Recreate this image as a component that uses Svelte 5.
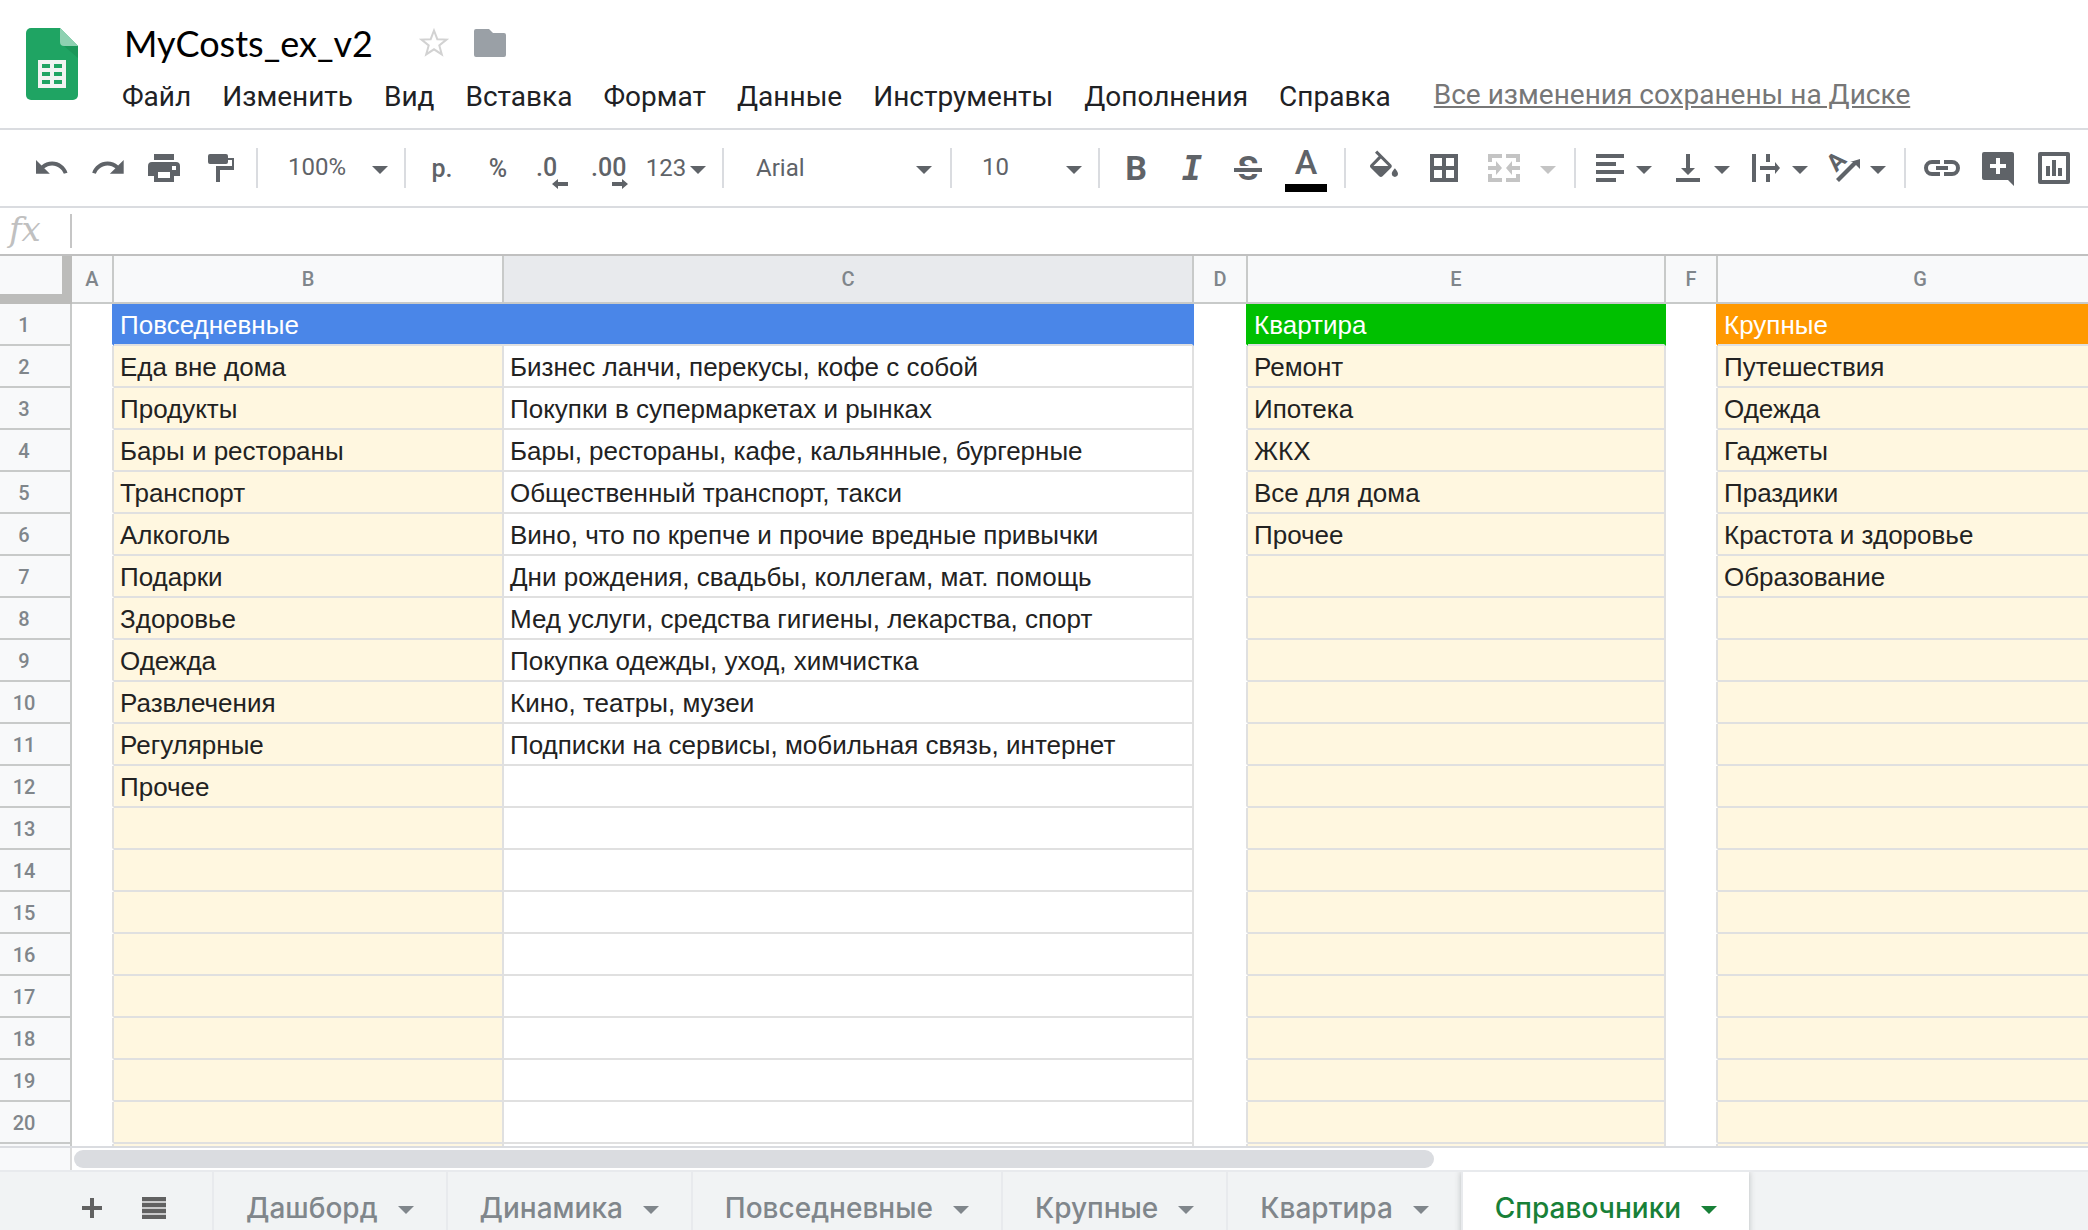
<script lang="ts">
  type Row = { b?: string; c?: string; e?: string; g?: string };

  const menus = ['Файл', 'Изменить', 'Вид', 'Вставка', 'Формат', 'Данные', 'Инструменты', 'Дополнения', 'Справка'];
  const columns = ['A', 'B', 'C', 'D', 'E', 'F', 'G'];
  const tabs = ['Дашборд', 'Динамика', 'Повседневные', 'Крупные', 'Квартира', 'Справочники'];

  const rows: Row[] = [
    { b: 'Еда вне дома', c: 'Бизнес ланчи, перекусы, кофе с собой', e: 'Ремонт', g: 'Путешествия' },
    { b: 'Продукты', c: 'Покупки в супермаркетах и рынках', e: 'Ипотека', g: 'Одежда' },
    { b: 'Бары и рестораны', c: 'Бары, рестораны, кафе, кальянные, бургерные', e: 'ЖКХ', g: 'Гаджеты' },
    { b: 'Транспорт', c: 'Общественный транспорт, такси', e: 'Все для дома', g: 'Праздики' },
    { b: 'Алкоголь', c: 'Вино, что по крепче и прочие вредные привычки', e: 'Прочее', g: 'Крастота и здоровье' },
    { b: 'Подарки', c: 'Дни рождения, свадьбы, коллегам, мат. помощь', g: 'Образование' },
    { b: 'Здоровье', c: 'Мед услуги, средства гигиены, лекарства, спорт' },
    { b: 'Одежда', c: 'Покупка одежды, уход, химчистка' },
    { b: 'Развлечения', c: 'Кино, театры, музеи' },
    { b: 'Регулярные', c: 'Подписки на сервисы, мобильная связь, интернет' },
    { b: 'Прочее' },
    ...Array.from({ length: 9 }, () => ({}))
  ];

  const icons = {
    undo: 'M12.5 8c-2.65 0-5.05.99-6.9 2.6L2 7v9h9l-3.62-3.62c1.39-1.16 3.16-1.88 5.12-1.88 3.54 0 6.55 2.31 7.6 5.5l2.37-.78C21.08 11.03 17.15 8 12.5 8z',
    redo: 'M18.4 10.6C16.55 8.99 14.15 8 11.5 8c-4.65 0-8.58 3.03-9.96 7.22L3.9 16c1.05-3.19 4.05-5.5 7.6-5.5 1.95 0 3.73.72 5.12 1.88L13 16h9V7l-3.6 3.6z',
    print: 'M8 4h20v6H8zM6 12h24a4 4 0 0 1 4 4v10h-6v6H8v-6H2V16a4 4 0 0 1 4-4zM12 22v6h12v-6zM26 16v4h4v-4z',
    paint: 'M8 4h16a2 2 0 0 1 2 2v2h6v12H18v12h-4V16h16v-6h-4v2a2 2 0 0 1-2 2H8a2 2 0 0 1-2-2V6a2 2 0 0 1 2-2z',
    fill: 'M16.56 8.94L7.62 0 6.21 1.41l2.38 2.38-5.15 5.15c-.59.59-.59 1.54 0 2.12l5.5 5.5c.29.29.68.44 1.06.44s.77-.15 1.06-.44l5.5-5.5c.59-.58.59-1.53 0-2.12zM5.21 10L10 5.21 14.79 10H5.21zM19 11.5s-2 2.17-2 3.5c0 1.1.9 2 2 2s2-.9 2-2c0-1.33-2-3.5-2-3.5z',
    borders: 'M4 4h28v28H4zM8 8v8h8V8zM20 8v8h8V8zM8 20v8h8v-8zM20 20v8h8v-8z',
    merge: 'M2 4h14v4H6v4H2zM34 4H20v4h10v4h4zM2 32h14v-4H6v-4H2zM34 32H20v-4h10v-4h4zM2 16h8v-5l6 7-6 7v-5H2zM34 16h-8v-5l-6 7 6 7v-5h8z',
    align: 'M4 4h28v4H4zM4 12h20v4H4zM4 20h28v4H4zM4 28h20v4H4z',
    valign: 'M16 4h4v14h5l-7 7-7-7h5zM6 28h24v4H6z',
    wrap: 'M4 4h4v28H4zM18 4h4v8h-4zM18 24h4v8h-4zM12 16h15v-4l5 6-5 6v-4H12z',
    link: 'M16 10H8a8 8 0 0 0 0 16h8v-4H8a4 4 0 0 1 0-8h8zM20 10h8a8 8 0 0 1 0 16h-8v-4h8a4 4 0 0 0 0-8h-8zM12 16h12v4H12z',
    comment: 'M4 2h28a2 2 0 0 1 2 2v32l-6-6H4a2 2 0 0 1-2-2V4a2 2 0 0 1 2-2zM16 8v6h-6v4h6v6h4v-6h6v-4h-6V8z',
    chart: 'M4 2h28a2 2 0 0 1 2 2v28a2 2 0 0 1-2 2H4a2 2 0 0 1-2-2V4a2 2 0 0 1 2-2zM6 6v24h24V6zM10 16h4v10h-4zM16 10h4v16h-4zM22 18h4v8h-4z'
  };

  // Icons drawn on a grid other than 36 x 36
  const boxes: Record<string, string> = {
    undo: '0.7 0.5 23.4 23.4',
    redo: '0.1 0.5 23.4 23.4',
    fill: '0.43 -0.3 23.14 23.14'
  };

  let active = $state('Справочники');
  let zoom = $state('100%');
  let font = $state('Arial');
  let size = $state('10');
  let formula = $state('');
</script>

{#snippet icon(name: keyof typeof icons)}
  <svg class="icon" viewBox={boxes[name] ?? '0 0 36 36'} aria-hidden="true">
    <path fill-rule="evenodd" d={icons[name]} />
  </svg>
{/snippet}

{#snippet caret()}
  <svg class="caret" viewBox="0 0 16 8" aria-hidden="true"><path d="M0 0h16L8 8z" /></svg>
{/snippet}

{#snippet tool(name: keyof typeof icons, label: string)}
  <button class="tool" aria-label={label}>{@render icon(name)}</button>
{/snippet}

{#snippet dropTool(name: keyof typeof icons, label: string)}
  <button class="tool drop" aria-label={label}>{@render icon(name)}{@render caret()}</button>
{/snippet}

<div class="app">
  <header>
    <svg class="logo" viewBox="0 0 52 72" aria-hidden="true">
      <path fill="#1fa463" d="M5 0h29l18 18v49a5 5 0 0 1-5 5H5a5 5 0 0 1-5-5V5a5 5 0 0 1 5-5z" />
      <path fill="#8ed1b1" d="M34 0l18 18H38a4 4 0 0 1-4-4z" />
      <path fill="#188a50" d="M38 18h14v12z" opacity="0.5" />
      <path fill="#f1f3f2" fill-rule="evenodd" d="M12 32h28v28H12zM16 36v4h8v-4zM28 36v4h8v-4zM16 44v4h8v-4zM28 44v4h8v-4zM16 52v4h8v-4zM28 52v4h8v-4z" />
    </svg>
    <div class="heading">
      <div class="title">
        <h1>MyCosts_ex_v2</h1>
        <button class="star" aria-label="Пометить">
          <svg viewBox="0 0 32 32" aria-hidden="true"><path d="M16 3.5l3.3 8.7 9.2.4-7.2 5.8 2.5 9-7.8-5.1-7.8 5.1 2.5-9-7.2-5.8 9.2-.4z" /></svg>
        </button>
        <button class="folder" aria-label="Переместить">
          <svg viewBox="0 0 32 28" aria-hidden="true"><path d="M2 0h13l4 4h11a2 2 0 0 1 2 2v20a2 2 0 0 1-2 2H2a2 2 0 0 1-2-2V2a2 2 0 0 1 2-2z" /></svg>
        </button>
      </div>
      <nav>
        {#each menus as item}
          <button>{item}</button>
        {/each}
        <a href="#saved">Все изменения сохранены на Диске</a>
      </nav>
    </div>
  </header>

  <div class="toolbar" role="toolbar">
    <div class="group">
      {@render tool('undo', 'Отменить')}
      {@render tool('redo', 'Повторить')}
      {@render tool('print', 'Печать')}
      {@render tool('paint', 'Копировать форматирование')}
    </div>
    <div class="group">
      <div class="select">
        <select aria-label="Масштаб" bind:value={zoom}><option>100%</option></select>
        {@render caret()}
      </div>
    </div>
    <div class="group">
      <button class="tool">р.</button>
      <button class="tool">%</button>
      <button class="tool" aria-label="Уменьшить число знаков">
        <svg class="icon" viewBox="0 0 36 36"><text x="0" y="26">.0</text><path d="M16 34l6-5v3h10v4H22v3z" /></svg>
      </button>
      <button class="tool" aria-label="Увеличить число знаков">
        <svg class="icon" viewBox="0 0 36 36"><text x="-1" y="26">.00</text><path d="M36 34l-6-5v3H20v4h10v3z" /></svg>
      </button>
      <button class="tool formats">123{@render caret()}</button>
    </div>
    <div class="group">
      <div class="select font">
        <select aria-label="Шрифт" bind:value={font}><option>Arial</option></select>
        {@render caret()}
      </div>
    </div>
    <div class="group">
      <div class="select">
        <select aria-label="Размер шрифта" bind:value={size}><option>10</option></select>
        {@render caret()}
      </div>
    </div>
    <div class="group">
      <button class="tool letter bold">B</button>
      <button class="tool letter italic">I</button>
      <button class="tool" aria-label="Зачеркнутый">
        <svg class="icon" viewBox="0 0 36 36">
          <text class="strike" x="18" y="30" text-anchor="middle">S</text>
          <path fill="#fff" d="M4 16h28v8H4z" />
          <path d="M4 18h28v4H4z" />
        </svg>
      </button>
      <button class="tool wide color"><span>A</span></button>
    </div>
    <div class="group">
      <button class="tool wide" aria-label="Цвет заливки">{@render icon('fill')}</button>
      <button class="tool wide" aria-label="Границы">{@render icon('borders')}</button>
      <button class="tool merge" aria-label="Объединить ячейки" disabled>{@render icon('merge')}{@render caret()}</button>
    </div>
    <div class="group">
      {@render dropTool('align', 'Выравнивание по горизонтали')}
      {@render dropTool('valign', 'Выравнивание по вертикали')}
      {@render dropTool('wrap', 'Перенос текста')}
      <button class="tool drop" aria-label="Поворот текста">
        <svg class="icon" viewBox="0 0 36 36">
          <text class="turned" transform="translate(16 17) rotate(-45)" text-anchor="middle">A</text>
          <path d="M10 29l17-17h-3l10-3v10l-4-4-17 17z" />
        </svg>
        {@render caret()}
      </button>
    </div>
    <div class="group">
      {@render tool('link', 'Вставить ссылку')}
      {@render tool('comment', 'Вставить комментарий')}
      {@render tool('chart', 'Вставить диаграмму')}
    </div>
  </div>

  <div class="formula">
    <label for="formula">fx</label>
    <input id="formula" bind:value={formula} />
  </div>

  <main>
    <table>
      <colgroup>
        <col class="w-num" /><col class="w-a" /><col class="w-b" /><col class="w-c" /><col class="w-d" /><col class="w-e" /><col class="w-f" /><col />
      </colgroup>
      <thead>
        <tr>
          <td class="corner"></td>
          {#each columns as column}
            <th scope="col" class:selected={column === 'C'}>{column}</th>
          {/each}
        </tr>
      </thead>
      <tbody>
        <tr class="first">
          <th scope="row">1</th>
          <td class="gap before-blue"></td>
          <td class="blue" colspan="2">Повседневные</td>
          <td class="gap before-green"></td>
          <td class="green">Квартира</td>
          <td class="gap before-orange"></td>
          <td class="orange">Крупные</td>
        </tr>
        {#each rows as row, i}
          <tr>
            <th scope="row">{i < 19 ? i + 2 : ''}</th>
            <td class="gap"></td>
            <td class="cream">{row.b ?? ''}</td>
            <td>{row.c ?? ''}</td>
            <td class="gap"></td>
            <td class="cream">{row.e ?? ''}</td>
            <td class="gap"></td>
            <td class="cream">{row.g ?? ''}</td>
          </tr>
        {/each}
      </tbody>
    </table>
  </main>

  <div class="scroll">
    <div class="track"><div class="thumb"></div></div>
  </div>

  <footer>
    <div class="sheet-tools">
      <button aria-label="Добавить лист">
        <svg class="plus" viewBox="0 0 20 20" aria-hidden="true"><path d="M8 0h4v8h8v4h-8v8H8v-8H0V8h8z" /></svg>
      </button>
      <button aria-label="Все листы">
        <svg class="list" viewBox="0 0 24 24" aria-hidden="true">
          <path fill="#c9c9ca" d="M0 1h24v22H0z" />
          <path d="M0 1h24v4H0zM0 7h24v4H0zM0 13h24v4H0zM0 19h24v4H0z" />
        </svg>
      </button>
    </div>
    {#each tabs as tab}
      <button class="tab" class:active={tab === active} onclick={() => (active = tab)}>
        {tab}{@render caret()}
      </button>
    {/each}
  </footer>
</div>

<style>
  :global(body) {
    margin: 0;
    background: #fff;
  }

  .app {
    display: flex;
    flex-direction: column;
    height: 100vh;
    overflow: hidden;
    font-family: Roboto, 'Liberation Sans', sans-serif;
    color: #202124;
  }

  button,
  select,
  input {
    margin: 0;
    padding: 0;
    border: 0;
    background: none;
    color: inherit;
    font: inherit;
  }

  svg {
    display: block;
    flex: none;
    fill: currentColor;
  }

  /* Header */
  header {
    display: flex;
    gap: 44px;
    padding: 20px 26px 14px;
    border-bottom: 2px solid #dadce0;
  }

  .logo {
    width: 52px;
    height: 72px;
    margin-top: 8px;
  }

  .title {
    display: flex;
    align-items: center;
    height: 46px;
    padding-left: 2px;
  }

  h1 {
    margin: 0;
    font-family: Lato, sans-serif;
    font-size: 36px;
    font-weight: 400;
    color: #000;
  }

  .star {
    margin-left: 45px;
  }

  .star svg {
    width: 32px;
    height: 32px;
    fill: none;
    stroke: #d2d2d2;
    stroke-width: 2;
  }

  .folder {
    margin-left: 24px;
    color: #9aa0a6;
  }

  .folder svg {
    width: 32px;
    height: 28px;
  }

  nav {
    display: flex;
    align-items: flex-start;
    gap: 31px;
    height: 48px;
    font-size: 28px;
    line-height: 62px;
    white-space: nowrap;
  }

  nav a {
    margin-left: 12px;
    color: #777;
    line-height: 58px;
  }

  /* Toolbar */
  .toolbar {
    display: flex;
    align-items: center;
    height: 76px;
    padding-left: 16px;
    border-bottom: 2px solid #dadce0;
    color: #5f6368;
    font-size: 25px;
    font-weight: 500;
  }

  .group {
    display: flex;
    align-items: center;
    height: 40px;
    padding: 0 8px;
  }

  .group + .group {
    border-left: 2px solid #dadce0;
  }

  .tool {
    display: flex;
    align-items: center;
    justify-content: center;
    width: 56px;
    height: 40px;
  }

  .icon {
    width: 36px;
    height: 36px;
    overflow: visible;
  }

  .caret {
    width: 16px;
    height: 8px;
    margin-top: 4px;
  }

  .wide {
    width: 60px;
  }

  .formats {
    gap: 4px;
    width: 76px;
    font-size: 24px;
    font-weight: 400;
  }

  .drop,
  .merge {
    justify-content: flex-start;
    gap: 8px;
    width: 78px;
    padding-left: 8px;
  }

  .merge {
    gap: 18px;
    width: 92px;
    padding-left: 12px;
    color: #c4c4c4;
  }

  .select {
    display: grid;
    align-items: center;
    width: 130px;
  }

  .select.font {
    width: 210px;
  }

  .select > :global(*) {
    grid-area: 1 / 1;
  }

  .select .caret {
    justify-self: end;
    margin-right: 8px;
    pointer-events: none;
  }

  .select.font .caret {
    margin-right: 10px;
  }

  select {
    appearance: none;
    width: 100%;
    padding-left: 22px;
    padding-bottom: 2px;
    font-size: 24px;
    font-weight: 400;
  }

  .select.font select {
    padding-left: 24px;
    padding-bottom: 0;
  }

  .letter {
    font-size: 34px;
  }

  .bold {
    font-weight: 700;
  }

  .italic {
    font-family: 'DejaVu Sans Mono', monospace;
    font-weight: 700;
    font-style: italic;
  }

  .strike {
    font-size: 34px;
    font-weight: 700;
  }

  .turned {
    font-size: 24px;
    font-weight: 700;
  }

  .color span {
    width: 42px;
    height: 40px;
    border-bottom: 8px solid #000;
    font-size: 34px;
    line-height: 36px;
  }

  /* Formula bar */
  .formula {
    display: flex;
    align-items: center;
    height: 46px;
    border-bottom: 2px solid #c0c0c0;
  }

  .formula label {
    width: 61px;
    padding: 0 0 4px 9px;
    color: #c0c0c0;
    font-family: 'DejaVu Serif', serif;
    font-size: 34px;
    font-style: italic;
    line-height: 34px;
  }

  .formula input {
    flex: 1;
    height: 34px;
    padding-left: 8px;
    border-left: 2px solid #c6c6c6;
    font-size: 26px;
    outline: none;
  }

  /* Grid */
  main {
    flex: 1;
    min-height: 0;
    overflow: hidden;
  }

  /* The last column runs on past the window's edge */
  table {
    width: calc(100% + 36px);
    table-layout: fixed;
    border-spacing: 0;
    font-family: 'Liberation Sans', Arial, sans-serif;
  }

  .w-num {
    width: 72px;
  }

  .w-a {
    width: 42px;
  }

  .w-b {
    width: 390px;
  }

  .w-c {
    width: 690px;
  }

  .w-d {
    width: 54px;
  }

  .w-e {
    width: 418px;
  }

  .w-f {
    width: 52px;
  }

  th,
  td {
    box-sizing: border-box;
    height: 42px;
    padding: 0;
    border-right: 2px solid #e0e0e0;
    border-bottom: 2px solid #e0e0e0;
    white-space: nowrap;
  }

  th {
    background: #f8f9fa;
    border-color: #c8cac9;
    color: #80868b;
    font-family: Roboto, sans-serif;
    font-size: 20px;
    font-weight: 500;
  }

  thead th,
  thead td {
    height: 48px;
    border-color: #c8cac9;
  }

  tbody th {
    padding: 2px 22px 0 0;
  }

  .selected {
    background: #e8eaed;
  }

  thead .corner {
    background: #f8f9fa;
    border-right: 10px solid #bcbcba;
    border-bottom: 10px solid #bcbcba;
  }

  tbody td {
    padding: 2px 0 0 6px;
    color: #222;
    font-size: 26px;
    line-height: 38px;
  }

  td.gap {
    border-bottom-color: transparent;
  }

  .cream {
    background: #fff7e0;
  }

  .first td {
    color: #fff;
  }

  .first .blue {
    background: #4a86e8;
  }

  .first .green {
    background: #00c000;
  }

  .first .orange {
    background: #ff9900;
  }

  .first .blue,
  .first .before-blue {
    border-right-color: #4a86e8;
  }

  .first .green,
  .first .before-green {
    border-right-color: #00c000;
  }

  .first .orange,
  .first .before-orange {
    border-right-color: #ff9900;
  }

  /* Scrollbar */
  .scroll {
    height: 22px;
    padding-left: 70px;
    border-top: 2px solid #dadce0;
    background: #f8f9fa;
  }

  .track {
    box-sizing: border-box;
    height: 22px;
    padding: 2px;
    border-left: 2px solid #dadada;
    background: #fff;
  }

  .thumb {
    width: 67.6%;
    height: 18px;
    border-radius: 9px;
    background: #dadce0;
  }

  /* Sheet tabs */
  footer {
    display: flex;
    height: 58px;
    border-top: 2px solid #e8eaed;
    background: #f1f3f4;
    overflow: hidden;
  }

  .sheet-tools {
    display: flex;
    align-items: center;
    gap: 40px;
    height: 72px;
    padding: 0 46px 0 82px;
    color: #616161;
  }

  .plus {
    width: 20px;
    height: 20px;
  }

  .list {
    width: 24px;
    height: 24px;
  }

  .tab {
    display: flex;
    align-items: center;
    gap: 20px;
    height: 72px;
    padding: 0 32px;
    border-left: 2px solid #e8eaed;
    color: #80868b;
    font-family: Inter, Roboto, sans-serif;
    font-size: 28px;
    font-weight: 500;
  }

  .tab.active {
    background: #fff;
    box-shadow: 0 0 6px rgba(60, 64, 67, 0.3);
    color: #188038;
  }
</style>
